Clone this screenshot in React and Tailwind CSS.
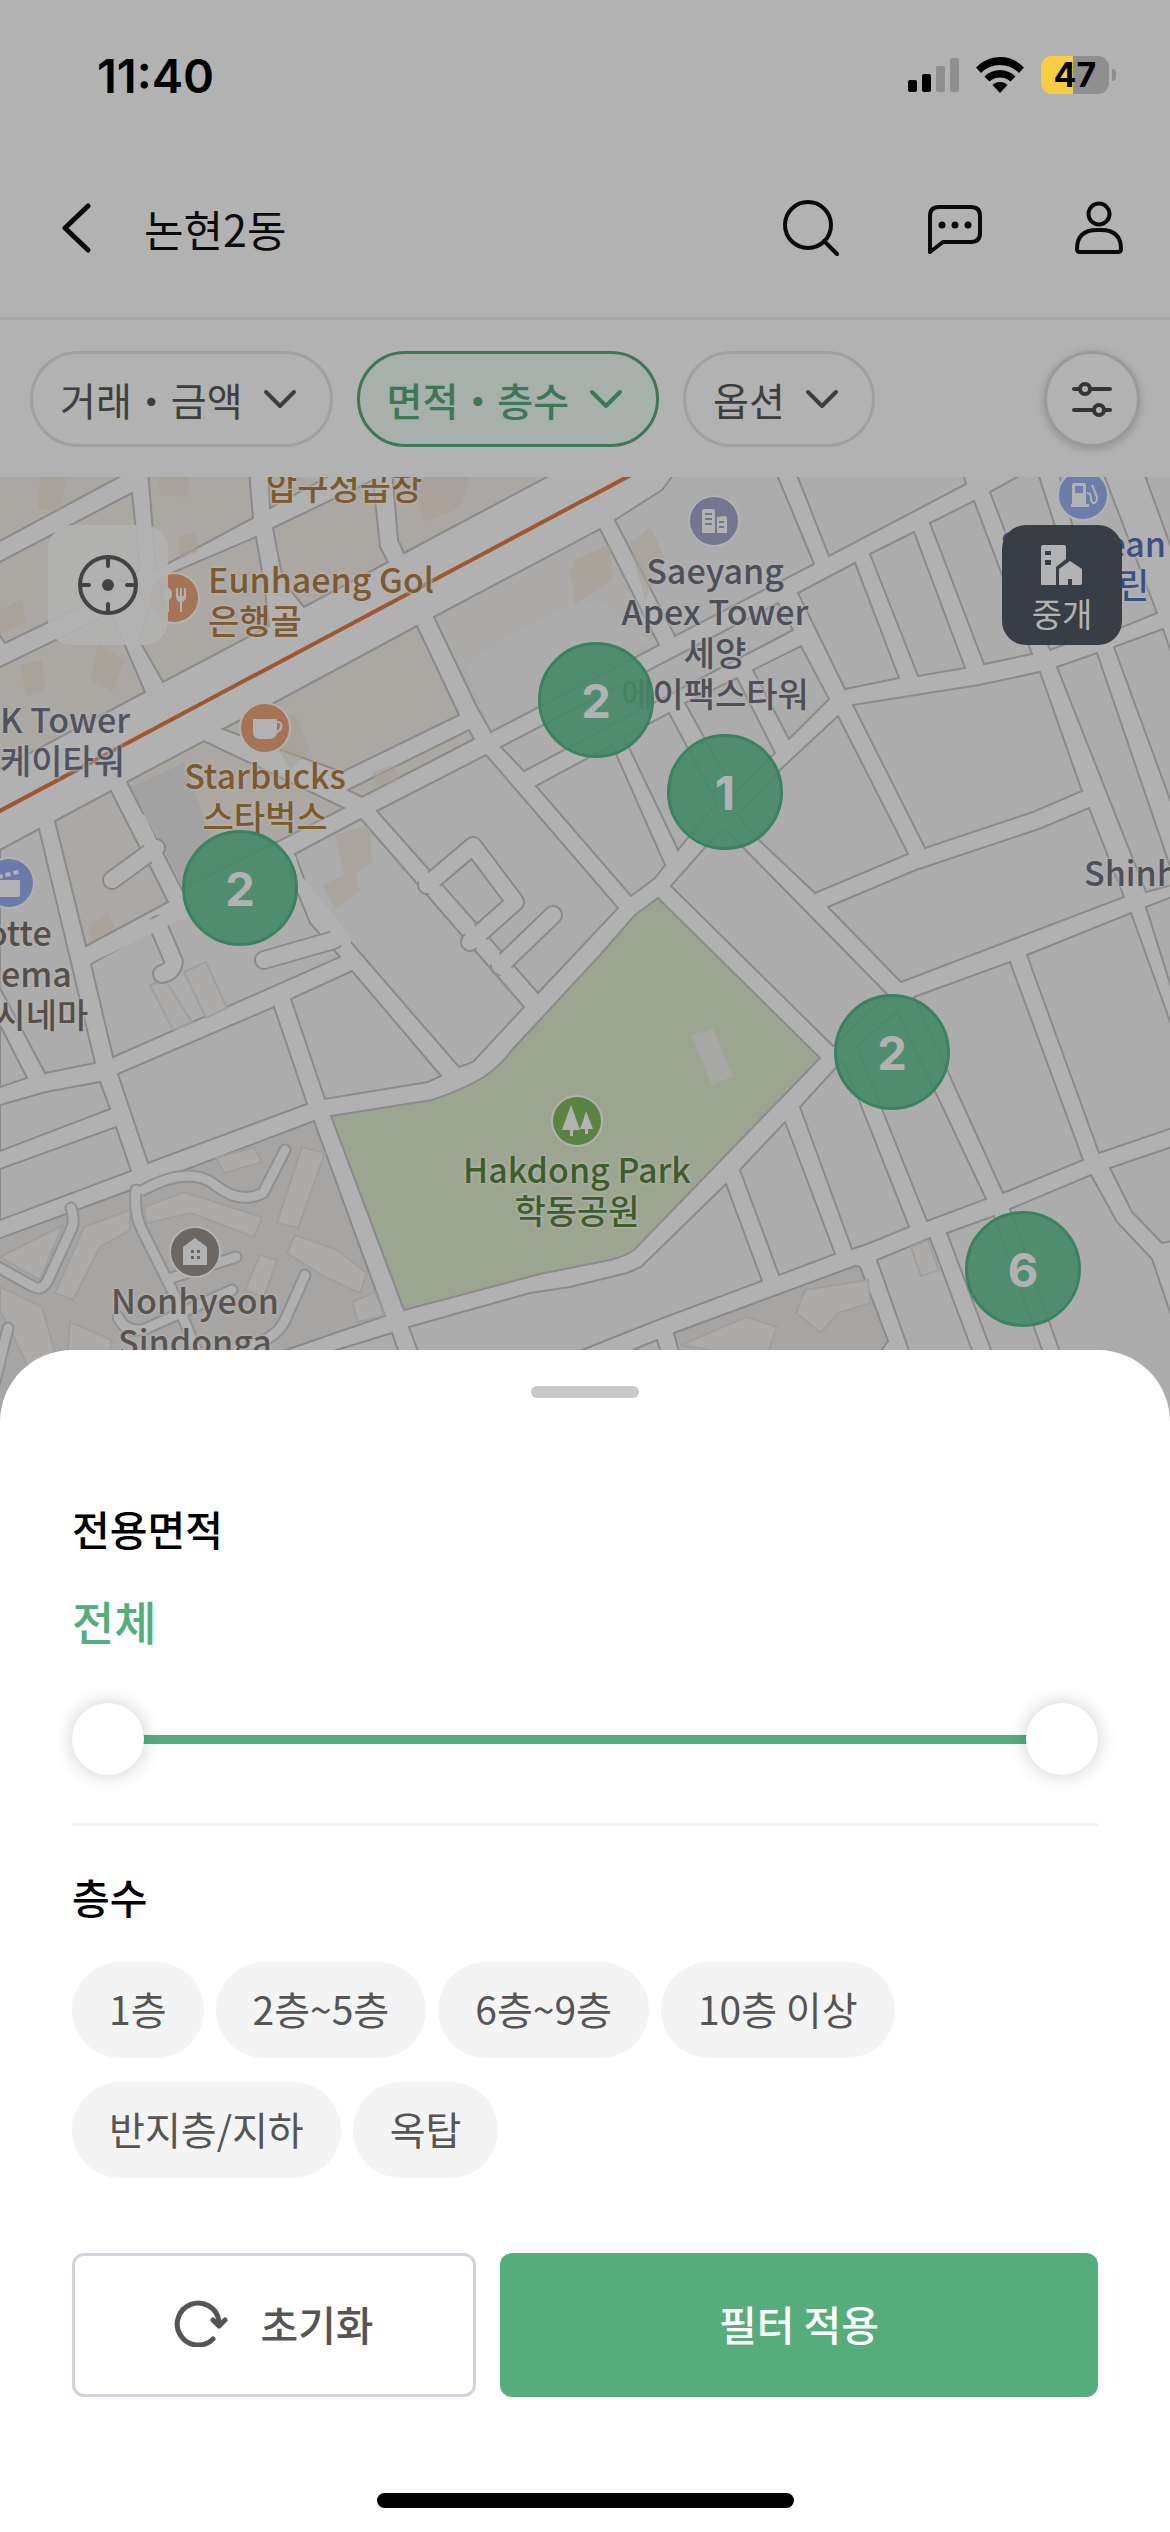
import React, { useState } from "react";
import clsx from "clsx";

const FLOORS = ["1층", "2층~5층", "6층~9층", "10층 이상", "반지층/지하", "옥탑"];

const FILTERS = [
  { id: "deal", label: "거래・금액" },
  { id: "area", label: "면적・층수" },
  { id: "option", label: "옵션" }
];

// City blocks, everything between them reads as road
const BLOCKS = [
  "0,850 39,829 95,1063 45,1073 0,988",
  "0,1025 27,1078 0,1087",
  "361,819 295,854 310,895 459,1067 473,1062 524,1007",
  "118,1074 274,1007 307,1104 148,1163",
  "291,999 352,971 441,1076 428,1082 325,1099",
  "0,1105 46,1092 100,1082 110,1109 0,1151",
  "0,1169 116,1127 131,1171 0,1220",
  "409,1327 530,1293 570,1287 627,1273 641,1267 726,1184 762,1281 660,1319 587,1348 500,1385 425,1370",
  "330,1352 392,1333 402,1362",
  "740,1170 785,1122 835,1254 779,1275",
  "800,1107 843,1060 909,1227 867,1244 852,1249",
  "857,1047 897,1011 986,1199 927,1221",
  "914,997 1010,962 1083,1160 1003,1193",
  "1027,955 1131,913 1172,1027 1172,1128 1099,1153",
  "1110,1168 1172,1147 1172,1241 1162,1243 1132,1212",
  "1010,1209 1091,1175 1117,1222 1152,1259 1172,1318 1172,1420 1080,1410",
  "947,1233 994,1216 1060,1400 1010,1400",
  "877,1260 930,1238 985,1385 923,1390",
  "635,1349 657,1340 663,1360",
  "1146,907 1172,897 1172,990",
  "828,907 916,870 1039,829 1089,808 1124,897 901,982",
  "671,886 723,827 888,995 833,1046",
  "838,716 780,770 738,815 759,840 815,893 908,854",
  "853,705 979,685 1040,672 1082,791 1033,812 925,848",
  "798,593 855,563 899,678 845,689",
  "870,554 914,532 965,668 918,676",
  "930,523 974,501 1032,654 984,664",
  "795,470 962,470 966,484 829,556",
  "677,470 775,470 814,564 675,636 615,520 662,490",
  "501,747 778,603 793,630 524,771",
  "753,670 801,646 829,699 789,739",
  "536,786 612,745 665,865 655,878 631,896",
  "624,737 669,713 717,803 678,850",
  "685,703 737,678 775,753 735,793",
  "377,811 486,755 618,908 538,993",
  "990,492 1030,470 1037,470 1090,635 1050,650",
  "1058,470 1102,470 1157,613 1101,636",
  "1143,470 1172,470 1172,550",
  "1057,667 1097,653 1172,872 1172,885 1146,892",
  "1114,647 1163,629 1172,655 1172,805"
];

const SHOP_BLOCKS = [
  "-2,542 132,470 -2,470",
  "-2,563 132,493 140,570 111,592 5,643 -2,633",
  "-2,668 111,613 145,692 -2,770",
  "148,470 249,470 253,518 156,570",
  "160,578 256,537 265,590 269,626 163,682 139,640",
  "273,528 373,480 380,547 388,562 304,607 290,590 281,570",
  "268,470 340,470 270,508",
  "392,470 398,540 404,553 560,470",
  "223,729 274,703 417,626 459,715 342,772",
  "127,782 204,741 344,808 182,890",
  "348,790 469,730 474,739 362,797"
];

const BUILDINGS = [
  "144,1207 184,1192 262,1217 254,1237 191,1213 147,1223",
  "302,1147 325,1153 298,1228 277,1223",
  "295,1235 337,1250 367,1273 360,1293 325,1277 287,1253",
  "84,1227 130,1210 130,1230 100,1247 73,1300 55,1293",
  "260,1255 277,1260 264,1297 245,1290",
  "0,1287 42,1307 60,1370 30,1370 0,1310",
  "216,1158 254,1147 262,1162 224,1173",
  "0,1257 63,1225 40,1280",
  "70,1322 112,1340 106,1370 66,1370",
  "352,1302 375,1292 384,1315 358,1322",
  "150,985 165,980 192,1022 173,1030",
  "184,972 206,962 227,1008 206,1018",
  "796,1313 805,1290 868,1280 870,1303 838,1313 821,1333",
  "681,1345 746,1317 777,1327 765,1360",
  "911,1247 928,1240 939,1270 921,1276"
];

const SHADED = [
  "40,477 66,477 60,512 38,508",
  "158,477 190,477 188,497 160,495",
  "98,645 125,660 112,692 90,680",
  "20,665 42,660 46,690 26,696",
  "0,610 22,600 26,622 0,634",
  "178,537 196,532 198,552 180,560",
  "410,477 470,477 460,508 424,522",
  "568,570 597,550 600,570 572,584",
  "284,712 296,716 310,750 290,770 280,752",
  "372,772 395,764 398,782 376,786",
  "630,544 650,526 665,560 645,600",
  "574,560 610,544 612,580 574,604",
  "335,835 370,825 372,862 345,880",
  "322,885 355,870 360,890 336,910",
  "88,925 108,914 116,928 90,942"
];

const ALLEYS = [
  "M143 1190 Q190 1165 215 1185 T263 1193 L285 1150",
  "M136 1190 Q134 1215 142 1230 L172 1290 L200 1360",
  "M71 1208 Q76 1222 70 1232 L48 1280 Q42 1292 32 1286 L-4 1266",
  "M168 1279 L236 1257",
  "M118 1317 Q126 1334 145 1329 L232 1290",
  "M305 1275 L286 1318 Q278 1338 250 1345",
  "M8 1328 L-6 1385"
];

const LANES = ["M427 885 L473 846 L515 902 L470 942", "M500 966 L553 915", "M156 848 L112 880", "M158 925 L174 962 Q172 972 162 974", "M334 940 L264 960"];

const LABEL =
  "absolute whitespace-nowrap text-[34px] leading-[41px] font-medium [text-shadow:0_0_3px_#fff,0_0_3px_#fff,0_0_4px_#fff]";

const MapCanvas = () => (
  <svg
    viewBox="0 477 1170 943"
    preserveAspectRatio="xMidYMin slice"
    className="block h-[943px] w-full bg-[#fefefe]"
    aria-hidden="true"
  >
    <g fill="#f7f7f7" stroke="#c6c6c6" strokeWidth="2">
      {BLOCKS.map((points) => (
        <polygon key={points} points={points} />
      ))}
      <path d="M55 821 L111 791 L143 854 L152 870 L168 902 L86 946Z" fill="#f5f1ec" />
      <path d="M91 964 L147 933 L285 862 L310 923 L340 957 L113 1057Z" />
    </g>
    <g fill="#f5f0ea" stroke="#c6c6c6" strokeWidth="2">
      {SHOP_BLOCKS.map((points) => (
        <polygon key={points} points={points} />
      ))}
      <polygon points="434,617 600,529 659,645 491,732 476,705" fill="#f6f4f1" />
    </g>
    <polygon points="465,665 510,635 560,610 600,600 650,642 491,728" fill="#f7f7f7" />
    <polygon points="131,787 184,763 210,835 182,884" fill="#e9e9e9" />
    <g fill="#f3e3d2" opacity="0.55">
      {SHADED.map((points) => (
        <polygon key={points} points={points} />
      ))}
    </g>

    {/* Apartment complexes */}
    <g fill="#f0edeb" stroke="#c6c6c6" strokeWidth="2">
      <polygon points="145,1185 314,1121 385,1316 280,1352 200,1420 -2,1420 -2,1239 131,1190" />
      <polygon points="674,1333 855,1266 860,1267 888,1341 880,1352 679,1352" />
    </g>
    <g fill="#f7f5f3" stroke="#e6e3e0" strokeWidth="2">
      {BUILDINGS.map((points) => (
        <polygon key={points} points={points} />
      ))}
    </g>
    <g fill="none" strokeLinecap="round" strokeLinejoin="round">
      {ALLEYS.map((d) => (
        <path key={d} d={d} stroke="#cfcfcf" strokeWidth="13" />
      ))}
      {ALLEYS.map((d) => (
        <path key={`${d}-top`} d={d} stroke="#fcfcfc" strokeWidth="9" />
      ))}
      {LANES.map((d) => (
        <path key={d} d={d} stroke="#c6c6c6" strokeWidth="20" />
      ))}
      {LANES.map((d) => (
        <path key={`${d}-top`} d={d} stroke="#fefefe" strokeWidth="16" />
      ))}
      <path d="M369 815 L531 1000 M140 820 L176 900 M88 957 L290 860 M300 884 L345 940" stroke="#fefefe" strokeWidth="13" />
    </g>

    {/* Park */}
    <path
      d="M331 1116 L432 1100 Q462 1090 484 1077 Q500 1066 512 1050 L600 955 L635 915 L658 898 L820 1058 L634 1250 Q626 1256 610 1260 L540 1274 L404 1310Z"
      fill="#dfedcd"
      stroke="#c6c6c6"
      strokeWidth="2"
    />
    <polygon points="691,1035 713,1029 733,1076 712,1085" fill="#f0f1ea" />

    {/* Subway line */}
    <path d="M-4 813 L631 475" stroke="#e67b45" strokeWidth="4" fill="none" />

    {/* Place icons */}
    <g stroke="#fff" strokeWidth="2">
      <circle cx="174" cy="598" r="25" fill="#eda67c" />
      <circle cx="265" cy="728" r="25" fill="#eda67c" />
      <circle cx="714" cy="521" r="25" fill="#a7aad0" />
      <circle cx="1083" cy="495" r="25" fill="#9db3f5" />
      <circle cx="9" cy="883" r="25" fill="#9aaff5" />
      <circle cx="577" cy="1121" r="25" fill="#83be62" />
      <circle cx="195" cy="1252" r="25" fill="#9b948e" />
    </g>
    <g fill="#fff">
      <ellipse cx="168" cy="594" rx="4" ry="6" />
      <path d="M167 598h2v14h-2zM176 588h2v8h2v-8h2v8h2v-8h2v8q0 5-4 6v10h-2v-10q-4-1-4-6z" />
      <path d="M253 719h24v12q0 8-8 8h-8q-8 0-8-8z" />
      <path d="M277 722q7 0 3 8l-4 3" fill="none" stroke="#fff" strokeWidth="2" />
      <path d="M702 511q0-2 2-2h9q2 0 2 2v22h-13zM717 517l8-1q2 0 2 2v15h-10z" />
      <path d="M705 514h7M705 519h7M705 524h7M719 522h5M719 527h5" stroke="#a7aad0" strokeWidth="2" />
      <path d="M1072 485q0-2 2-2h10q2 0 2 2v19h3v3h-18v-3h1z" />
      <path d="M1087 493q4 0 4 5t3 5 3-6l-5-12" fill="none" stroke="#fff" strokeWidth="2" />
      <path d="M1075 486h8v7h-8z" fill="#9db3f5" />
      <path d="M-4 880h24v15q0 2-2 2H-4zM-4 876l6-2 1 4-7 2zM5 873l5-1 1 4-5 1zM13 871l5-1 1 4-5 1z" />
      <path d="M571 1105l9 25h-7v6h-3v-6h-8zM586 1111l7 18h-5v5h-3v-5h-5l3-8z" />
      <path d="M195 1238l12 9v18h-24v-18z" />
      <path d="M191 1250h3v3h-3zM197 1250h3v3h-3zM191 1256h3v3h-3zM197 1256h3v3h-3z" fill="#9b948e" />
    </g>
  </svg>
);

const ClusterPin = ({ count, className }) => (
  <button
    type="button"
    className={clsx(
      "absolute size-[116px] rounded-full border-[3px] border-[#55ba88] bg-[#63c494]/90 font-[Inter,sans-serif] text-[47px] leading-none font-bold text-white",
      className
    )}
  >
    {count}
  </button>
);

const Chevron = () => (
  <svg viewBox="0 0 34 20" className="h-5 w-[34px]" fill="none" stroke="currentColor" strokeWidth="4" strokeLinecap="round" strokeLinejoin="round">
    <path d="M3 3l14 14L31 3" />
  </svg>
);

const StatusBar = () => (
  <div className="relative z-30 flex h-[150px] items-center justify-between pr-[54px] pl-[97px] font-[Inter,sans-serif] text-black">
    <span className="text-[47px] leading-none font-semibold">11:40</span>
    <div className="flex items-center gap-[17px]">
      <svg viewBox="0 0 51 36" className="h-9 w-[51px]">
        <rect x="0" y="23" width="9" height="12" rx="2" />
        <rect x="14" y="17" width="9" height="18" rx="2" />
        <rect x="28" y="9" width="9" height="26" rx="2" fill="#8f8f8f" />
        <rect x="42" y="1" width="9" height="34" rx="2" fill="#8f8f8f" />
      </svg>
      <svg viewBox="0 0 48 36" className="h-9 w-12">
        <path d="M24 0Q38 0 48 10.500L43 16Q35 8 24 8T5 16L0 10.500Q10 0 24 0Z" />
        <path d="M24 13Q33 13 39.500 19.500L34.500 24.500Q30 20.500 24 20.500T13.500 24.500L8.500 19.500Q15 13 24 13Z" />
        <path d="M24 25Q28.500 25 31.500 28L24 36L16.500 28Q19.500 25 24 25Z" />
      </svg>
      <div className="flex items-center gap-[3px]">
        <div className="flex h-[38px] w-[68px] items-center justify-center rounded-[11px] bg-linear-to-r from-[#f8cd46] from-47% to-[#8f8f8f] to-47% text-[34px] leading-none font-bold">
          47
        </div>
        <div className="h-3 w-1 rounded-r-full bg-[#8f8f8f]"></div>
      </div>
    </div>
  </div>
);

const Header = () => (
  <header className="flex h-[170px] items-center border-b-[3px] border-[#eef1f2] pr-[42px] pb-3 pl-[60px] text-[#111]">
    <button type="button" aria-label="뒤로">
      <svg viewBox="0 0 32 50" className="h-[50px] w-8" fill="none" stroke="currentColor" strokeWidth="5" strokeLinecap="round" strokeLinejoin="round">
        <path d="M28 3L5 25l23 22" />
      </svg>
    </button>
    <h1 className="ml-[52px] flex-1 text-[43px] leading-[60px]">논현2동</h1>
    <div className="flex items-center gap-[86px]">
      <button type="button" aria-label="검색">
        <svg viewBox="0 0 58 58" className="size-[58px]" fill="none" stroke="currentColor" strokeWidth="4" strokeLinecap="round">
          <circle cx="26" cy="26" r="23" />
          <path d="M42 42l13 13" />
        </svg>
      </button>
      <button type="button" aria-label="채팅">
        <svg viewBox="0 0 58 58" className="size-[58px]" fill="none" stroke="currentColor" strokeWidth="4" strokeLinejoin="round">
          <path d="M4 53V17Q4 8 13 8H45Q54 8 54 17V34Q54 43 45 43H17Z" />
          <g fill="currentColor" stroke="none">
            <circle cx="16" cy="26" r="3.500" />
            <circle cx="29" cy="26" r="3.500" />
            <circle cx="42" cy="26" r="3.500" />
          </g>
        </svg>
      </button>
      <button type="button" aria-label="내 정보">
        <svg viewBox="0 0 58 58" className="size-[58px]" fill="none" stroke="currentColor" strokeWidth="4" strokeLinejoin="round">
          <circle cx="29" cy="15" r="10.500" />
          <path d="M7 50Q7 31 27 31H31Q51 31 51 50Q51 53 48 53H10Q7 53 7 50Z" />
        </svg>
      </button>
    </div>
  </header>
);

const FilterBar = ({ active }) => (
  <nav className="flex items-center gap-6 px-[30px] pt-[31px] pb-[30px]">
    {FILTERS.map((filter) => (
      <button
        key={filter.id}
        type="button"
        aria-pressed={filter.id === active}
        className={clsx(
          "flex h-24 items-center gap-5 rounded-full border-[3px] pr-[33px] pl-[27px] text-[39px] leading-none",
          filter.id === active ? "border-[#56ad7c] bg-[#f0fcf4] font-medium text-[#56ad7c]" : "border-[#e6e6e6] text-[#5a5a5a]"
        )}
      >
        {filter.label}
        <Chevron />
      </button>
    ))}
    <button
      type="button"
      aria-label="전체 필터"
      className="ml-auto flex size-24 items-center justify-center rounded-full border-[3px] border-[#dcdcdc] text-[#4d4d4d] shadow-[0_2px_10px_rgba(0,0,0,0.2)]"
    >
      <svg viewBox="0 0 42 36" className="h-9 w-[42px]" fill="none" stroke="currentColor" strokeWidth="4" strokeLinecap="round">
        <path d="M3 8h6M19 8h20M3 29h20M33 29h6" />
        <circle cx="14" cy="8" r="5" />
        <circle cx="28" cy="29" r="5" />
      </svg>
    </button>
  </nav>
);

const MapView = () => (
  <main className="relative h-[943px] overflow-hidden">
    <MapCanvas />
    <div className={clsx(LABEL, "top-[-12px] left-[266px] text-[#b5803f]")}>압구정곱창</div>
    <div className={clsx(LABEL, "top-[81px] left-[208px] text-[#b5803f]")}>
      Eunhaeng Gol
      <br />
      은행골
    </div>
    <div className={clsx(LABEL, "top-[221px] left-0 text-[#75788a]")}>
      K Tower
      <br />
      케이타워
    </div>
    <div className={clsx(LABEL, "top-[277px] left-[265px] -translate-x-1/2 text-center text-[#b5803f]")}>
      Starbucks
      <br />
      스타벅스
    </div>
    <div className={clsx(LABEL, "top-[72px] left-[715px] -translate-x-1/2 text-center text-[#70717f]")}>
      Saeyang
      <br />
      Apex Tower
      <br />
      세양
      <br />
      에이팩스타워
    </div>
    <div className={clsx(LABEL, "top-[434px] left-[10px] -translate-x-1/2 text-center text-[#7c7168]")}>
      Lotte
      <br />
      Cinema
      <br />
      롯데시네마
    </div>
    <div className={clsx(LABEL, "top-[374px] left-[1084px] text-[#70717f]")}>Shinhan</div>
    <div className={clsx(LABEL, "top-[45px] left-[1000px] text-[#5572bd]")}>S</div>
    <div className={clsx(LABEL, "top-[45px] right-[4px] text-[#5572bd]")}>ean</div>
    <div className={clsx(LABEL, "top-[86px] right-[21px] text-[#5572bd]")}>린</div>
    <div className={clsx(LABEL, "top-[671px] left-[577px] -translate-x-1/2 text-center text-[#578838]")}>
      Hakdong Park
      <br />
      학동공원
    </div>
    <div className={clsx(LABEL, "top-[802px] left-[195px] -translate-x-1/2 text-center text-[#7f7872]")}>
      Nonhyeon
      <br />
      Sindonga
    </div>

    <ClusterPin count={2} className="top-[165px] left-[538px]" />
    <ClusterPin count={1} className="top-[257px] left-[667px]" />
    <ClusterPin count={2} className="top-[353px] left-[182px]" />
    <ClusterPin count={2} className="top-[517px] left-[834px]" />
    <ClusterPin count={6} className="top-[734px] left-[965px]" />

    <button
      type="button"
      aria-label="현재 위치"
      className="absolute top-12 left-12 flex size-[120px] items-center justify-center rounded-3xl bg-white/90 text-[#606060]"
    >
      <svg viewBox="0 0 60 60" className="size-[60px]" fill="none" stroke="currentColor" strokeWidth="4" strokeLinecap="round">
        <circle cx="30" cy="30" r="28" />
        <path d="M30 3v8M30 49v8M3 30h8M49 30h8" />
        <circle cx="30" cy="30" r="6" fill="currentColor" stroke="none" />
      </svg>
    </button>
    <button
      type="button"
      className="absolute top-12 right-12 flex size-[120px] flex-col items-center justify-center gap-2 rounded-3xl bg-[#515963] pt-2 text-[33px] leading-10 text-white"
    >
      <svg viewBox="0 0 42 40" className="h-10 w-[42px]" fill="currentColor">
        <path fillRule="evenodd" d="M0 2Q0 0 2 0H23Q25 0 25 2V14L15 22V40H0ZM4 6V10H10V6ZM4 15V20H10V15Z" />
        <path fillRule="evenodd" d="M29 16L41 24V38Q41 40 39 40H18V24ZM27 34V40H31V34Z" />
      </svg>
      중개
    </button>
  </main>
);

const THUMB =
  "pointer-events-none absolute inset-0 h-[72px] w-full appearance-none bg-transparent [&::-webkit-slider-thumb]:pointer-events-auto [&::-webkit-slider-thumb]:size-[72px] [&::-webkit-slider-thumb]:appearance-none [&::-webkit-slider-thumb]:rounded-full [&::-webkit-slider-thumb]:bg-white [&::-webkit-slider-thumb]:shadow-[0_0_20px_rgba(0,0,0,0.2)]";

const AreaSlider = ({ range, onChange }) => (
  <div className="relative flex h-[72px] items-center px-9">
    <div className="h-[9px] w-full bg-[#55ad7c]"></div>
    <input
      type="range"
      min="0"
      max="100"
      aria-label="최소 면적"
      value={range[0]}
      onChange={(e) => onChange([Math.min(Number(e.target.value), range[1]), range[1]])}
      className={THUMB}
    />
    <input
      type="range"
      min="0"
      max="100"
      aria-label="최대 면적"
      value={range[1]}
      onChange={(e) => onChange([range[0], Math.max(Number(e.target.value), range[0])])}
      className={THUMB}
    />
  </div>
);

const FilterSheet = () => {
  const [range, setRange] = useState([0, 100]);
  const [floors, setFloors] = useState([]);

  const toggleFloor = (floor) => {
    setFloors((prev) => (prev.includes(floor) ? prev.filter((f) => f !== floor) : [...prev, floor]));
  };

  const handleReset = () => {
    setRange([0, 100]);
    setFloors([]);
  };

  const isAll = range[0] === 0 && range[1] === 100;

  return (
    <section role="dialog" aria-label="면적 · 층수" className="flex flex-col rounded-t-[72px] bg-white px-[72px] pt-9 pb-6">
      <div className="h-3 w-[108px] self-center rounded-full bg-[#c9c9cb]"></div>

      {/* Area */}
      <h2 className="mt-[100px] text-[41px] leading-[60px] font-medium text-black">전용면적</h2>
      <p className="mt-8 text-[46px] leading-[60px] font-medium text-[#55ad7c]">{isAll ? "전체" : `${range[0]}~${range[1]}평`}</p>
      <div className="mt-[53px] border-b-[3px] border-[#f3f3f3] pb-12">
        <AreaSlider range={range} onChange={setRange} />
      </div>

      {/* Floors */}
      <h2 className="mt-10 text-[41px] leading-[60px] font-medium text-black">층수</h2>
      <div className="mt-9 flex max-w-[900px] flex-wrap gap-x-3 gap-y-6">
        {FLOORS.map((floor) => (
          <button
            key={floor}
            type="button"
            aria-pressed={floors.includes(floor)}
            onClick={() => toggleFloor(floor)}
            className={clsx(
              "h-24 rounded-full px-[37px] pb-1 text-[39px] leading-none",
              floors.includes(floor) ? "bg-[#f0fcf4] text-[#55ad7c]" : "bg-[#f4f4f4] text-[#555]"
            )}
          >
            {floor}
          </button>
        ))}
      </div>

      {/* Actions */}
      <div className="mt-[75px] flex gap-6 text-[41px] leading-none font-medium">
        <button
          type="button"
          onClick={handleReset}
          className="flex h-36 w-[404px] items-center justify-center gap-8 rounded-xl border-[3px] border-[#d0d4df] pb-1 text-[#555]"
        >
          <svg viewBox="0 0 54 48" className="h-12 w-[54px]" fill="none" stroke="currentColor" strokeWidth="5" strokeLinecap="round" strokeLinejoin="round">
            <path d="M39 40A21 21 0 1 1 45 22" />
            <path d="M39 21L45 27L51 21" />
          </svg>
          초기화
        </button>
        <button type="button" className="h-36 flex-1 rounded-xl bg-[#55ad7c] pb-1 text-white">
          필터 적용
        </button>
      </div>

      <div className="mt-24 h-[15px] w-[417px] self-center rounded-full bg-black"></div>
    </section>
  );
};

export default function App() {
  return (
    <div className="relative min-h-screen overflow-hidden bg-white font-['Noto_Sans_CJK_KR',sans-serif]">
      <StatusBar />
      <Header />
      <FilterBar active="area" />
      <MapView />
      <div className="absolute inset-0 z-20 flex flex-col justify-end bg-black/30">
        <FilterSheet />
      </div>
    </div>
  );
}
